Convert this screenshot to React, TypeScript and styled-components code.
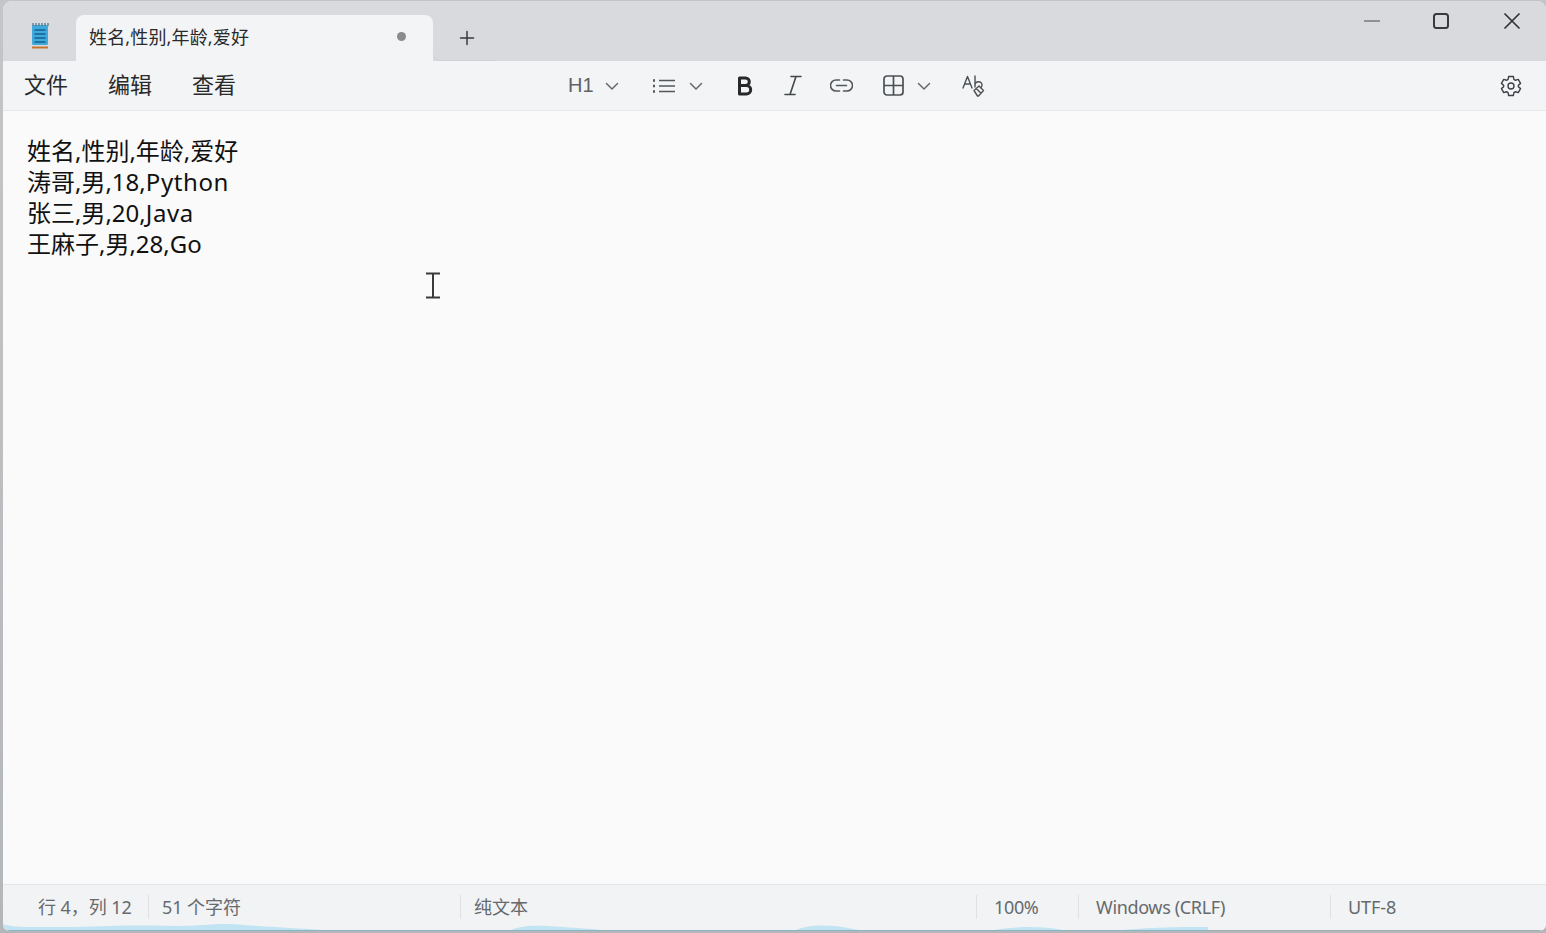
import React from "react";
import styled, { createGlobalStyle } from "styled-components";

const Global = createGlobalStyle`
  html, body { margin: 0; padding: 0; height: 100%; overflow: hidden; background: #b4b7ba; }
  * { box-sizing: border-box; }
`;
const LATIN = `"Noto Sans", "Noto Sans CJK SC", sans-serif`;

const Desktop = styled.div`
  width: 1546px;
  height: 933px;
  padding: 1px 0 2px 3px;
  background: linear-gradient(#c4c5c7, #b4b7ba);
  overflow: hidden;
`;
const Win = styled.main`
  position: relative;
  width: 1543px;
  height: 930px;
  display: flex;
  flex-direction: column;
  border-radius: 9px 9px 7px 7px;
  overflow: hidden;
  background: #fafafa;
  font-family: ${LATIN};
  color: #1b1b1b;
`;
const TitleBar = styled.header`
  height: 60px;
  flex: none;
  display: flex;
  align-items: flex-end;
  padding-left: 73px;
  background: #d8dadd;
`;
const AppIcon = styled.svg`
  width: 20px;
  height: 28px;
  margin: 0 26px 11px -46px;
  flex: none;
`;
const Tab = styled.div`
  position: relative;
  width: 357px;
  height: 46px;
  flex: none;
  display: flex;
  align-items: center;
  justify-content: space-between;
  padding: 0 27px 4px 13px;
  background: #f2f4f6;
  border-radius: 8px 8px 0 0;
  font-size: 18px;
  color: #2a2a2a;
`;
const TabName = styled.span`
  letter-spacing: 0.15px;
  white-space: nowrap;
`;
const Dot = styled.i`
  width: 9px;
  height: 9px;
  border-radius: 50%;
  background: #8a8b8d;
`;
const NewTab = styled.div`
  width: 64px;
  height: 46px;
  flex: none;
  display: flex;
  align-items: center;
  justify-content: center;
  padding-left: 4px;
  color: #3c3c3c;
  border-bottom: 1px solid #cfd1d4;
  border-bottom-left-radius: 8px;
`;
const WinControls = styled.div`
  margin-left: auto;
  align-self: flex-start;
  display: flex;
  align-items: center;
  gap: 53px;
  padding: 12px 26px 0 0;
  color: #333;
`;
const CloseGlyph = styled.svg`
  margin-left: 2px;
`;
const Toolbar = styled.nav`
  height: 50px;
  flex: none;
  display: flex;
  align-items: center;
  background: #f2f4f6;
  border-bottom: 1px solid #e6e7e9;
`;
const Menu = styled.div`
  width: 565px;
  flex: none;
  display: flex;
  gap: 40px;
  padding: 0 0 3px 21px;
`;
const MenuItem = styled.span`
  font-size: 22px;
  line-height: 30px;
  color: #2a2a2a;
  white-space: nowrap;
`;
const Tools = styled.div`
  display: flex;
  align-items: center;
  color: #3f4144;
`;
const H1 = styled.span`
  font-family: "Liberation Sans", sans-serif;
  font-size: 20px;
  color: #606265;
  width: 33px;
`;
const Tool = styled.span<{ $w: number; $gap?: number }>`
  width: ${(p) => p.$w}px;
  margin-left: ${(p) => p.$gap ?? 0}px;
  flex: none;
  display: flex;
  align-items: center;
  justify-content: center;
`;
const Gear = styled.span`
  margin-left: auto;
  display: flex;
  padding-right: 23px;
  color: #3f4144;
`;
const Editor = styled.pre`
  flex: 1;
  margin: 0;
  padding: 24px 24px;
  font-family: ${LATIN};
  font-size: 24px;
  line-height: 31px;
  color: #111;
  background: #fafafa;
`;
const Word = styled.span`
  letter-spacing: 0.6px;
`;
const CursorMark = styled.svg`
  position: absolute;
  left: 422px;
  top: 271px;
`;
const StatusBar = styled.footer`
  position: relative;
  height: 47px;
  flex: none;
  display: flex;
  align-items: center;
  padding-bottom: 3px;
  background: #f1f3f5;
  border-top: 1px solid #e4e5e7;
  font-size: 18px;
  color: #666a6d;
`;
const Cell = styled.div<{ $w: number; $pad?: number; $line?: boolean; $tight?: boolean }>`
  width: ${(p) => p.$w}px;
  flex: none;
  height: 24px;
  line-height: 24px;
  padding-left: ${(p) => p.$pad ?? 13}px;
  white-space: nowrap;
  letter-spacing: ${(p) => (p.$tight ? "-0.35px" : "-0.05px")};
  border-left: ${(p) => (p.$line ? "1px solid #dfe1e3" : "0")};
`;
const Wave = styled.svg`
  position: absolute;
  left: 0;
  bottom: 0;
`;

const Chevron = () => (
  <svg width="14" height="14" viewBox="0 0 14 14" fill="none" stroke="#66696c" strokeWidth="1.5" strokeLinecap="round" strokeLinejoin="round">
    <path d="M1.5 4.5 7 10l5.5-5.5" />
  </svg>
);

export default function App() {
  return (
    <Desktop>
      <Global />
      <Win>
        <TitleBar>
          <AppIcon viewBox="0 0 20 28">
            <rect x="2" y="3" width="16" height="20" rx="1.5" fill="#3fa9dc" />
            <rect x="2" y="24.5" width="16" height="2" fill="#c8732c" />
            <path d="M3 1v3M6 1v3M9 1v3M12 1v3M15 1v3M18 1v3" stroke="#4a6f86" strokeWidth="1.2" />
            <path d="M4.5 8h11M4.5 12h11M4.5 16h11M4.5 20h11" stroke="#12608f" strokeWidth="1.6" />
          </AppIcon>
          <Tab>
            <TabName>姓名,性别,年龄,爱好</TabName>
            <Dot />
          </Tab>
          <NewTab>
            <svg width="16" height="16" viewBox="0 0 16 16" stroke="#3a3a3a" strokeWidth="1.5" strokeLinecap="round">
              <path d="M8 1.5v13M1.5 8h13" />
            </svg>
          </NewTab>
          <WinControls>
            <svg width="16" height="16" viewBox="0 0 16 16" stroke="#777" strokeWidth="1.6"><path d="M0 8h16" /></svg>
            <svg width="16" height="16" viewBox="0 0 16 16" fill="none" stroke="#3a3a3a" strokeWidth="2"><rect x="1" y="1" width="14" height="14" rx="2.5" /></svg>
            <CloseGlyph width="16" height="16" viewBox="0 0 16 16" stroke="#333" strokeWidth="1.7" strokeLinecap="round"><path d="M1 1l14 14M15 1 1 15" /></CloseGlyph>
          </WinControls>
        </TitleBar>
        <Toolbar>
          <Menu>
            <MenuItem>文件</MenuItem>
            <MenuItem>编辑</MenuItem>
            <MenuItem>查看</MenuItem>
          </Menu>
          <Tools>
            <H1>H1</H1>
            <Tool $w={22}><Chevron /></Tool>
            <Tool $w={46} $gap={18}>
              <svg width="24" height="16" viewBox="0 0 24 16" stroke="#55585b" strokeWidth="1.5" fill="none">
                <path d="M7 2.5h16M7 8h16M7 13.5h16" />
                <path d="M1 2.5h2M1 8h2M1 13.5h2" strokeWidth="2.4" />
              </svg>
            </Tool>
            <Tool $w={18}><Chevron /></Tool>
            <Tool $w={48} $gap={16}>
              <svg width="16" height="20" viewBox="0 0 16 20" fill="none" stroke="#26282a" strokeWidth="3" strokeLinejoin="round">
                <path d="M2.5 2h6a3.8 3.8 0 0 1 0 7.6h-6zM2.5 9.6h7a4 4 0 0 1 0 8.4h-7z" />
              </svg>
            </Tool>
            <Tool $w={48}>
              <svg width="18" height="21" viewBox="0 0 18 21" fill="none" stroke="#44474a" strokeWidth="1.6" strokeLinecap="round">
                <path d="M7 1.5h10M1 19.5h10M12 1.5 6 19.5" />
              </svg>
            </Tool>
            <Tool $w={48}>
              <svg width="23" height="13" viewBox="0 0 23 13" fill="none" stroke="#55585b" strokeWidth="1.6" strokeLinecap="round">
                <path d="M9.5 1H6a5.5 5.5 0 0 0 0 11h3.5M13.5 1H17a5.5 5.5 0 0 1 0 11h-3.5M6.5 6.5h10" />
              </svg>
            </Tool>
            <Tool $w={48} $gap={4}>
              <svg width="21" height="21" viewBox="0 0 21 21" fill="none" stroke="#4d5053" strokeWidth="1.7">
                <rect x="1" y="1" width="19" height="19" rx="3" />
                <path d="M10.5 1v19M1 10.5h19" />
              </svg>
            </Tool>
            <Tool $w={14}><Chevron /></Tool>
            <Tool $w={56} $gap={14}>
              <svg width="25" height="24" viewBox="0 0 25 24" fill="none" stroke="#4d5053" strokeWidth="1.4" strokeLinejoin="round" strokeLinecap="round">
                <path d="M2 14 6.5 2.5 11 14M3.7 10h5.6" />
                <path d="M14 2v11M14 11.5c0-5 7-5 7-.5 0 1-.3 1.7-1 2.5" />
                <path d="m13 16.5 5-4.500 4.500 4.500-5 5.500h-1zM15.200 14.500l4.800 4.800" />
              </svg>
            </Tool>
          </Tools>
          <Gear>
            <svg width="24" height="24" viewBox="0 0 24 24" fill="none" stroke="currentColor" strokeWidth="1.4" strokeLinejoin="round">
              <path d="M9.67 2.5h4.66l.6 2.9 1.5.87 2.8-.93 2.33 4.03-2.2 1.97v1.32l2.2 1.97-2.33 4.03-2.8-.93-1.5.87-.6 2.9H9.67l-.6-2.9-1.5-.87-2.8.93-2.33-4.03 2.2-1.97v-1.32l-2.2-1.97 2.33-4.03 2.8.93 1.5-.87z" />
              <circle cx="12" cy="12" r="3" />
            </svg>
          </Gear>
        </Toolbar>
        <Editor>
          {"姓名,性别,年龄,爱好\n涛哥,男,18,"}
          <Word>Python</Word>
          {"\n张三,男,20,"}
          <Word>Java</Word>
          {"\n王麻子,男,28,Go"}
        </Editor>
        <CursorMark width="16" height="27" viewBox="0 0 16 27" fill="none" stroke="#3a3a3a" strokeWidth="2">
          <path d="M1 1.5h14M1 25.5h14M8 1.5v24" />
        </CursorMark>
        <StatusBar>
          <Cell $w={145} $pad={35}>行 4，列 12</Cell>
          <Cell $w={312} $line>51 个字符</Cell>
          <Cell $w={516} $line>纯文本</Cell>
          <Cell $w={102} $pad={17} $line $tight>100%</Cell>
          <Cell $w={252} $pad={17} $line $tight>Windows (CRLF)</Cell>
          <Cell $w={200} $pad={17} $line>UTF-8</Cell>
          <Wave width="1543" height="9" viewBox="0 0 1543 9" preserveAspectRatio="none">
            <path
              d="M0 2C10 6 30 5 70 5C110 4 130 3 170 4C200 4 220 0 240 3C270 5 310 7 335 9H505C520 3 530 3 560 5C575 6 590 7 610 9H790C805 3 820 2 845 6C855 8 860 9 870 9H985C1010 4 1040 4 1060 8L1070 9H1105C1150 5 1180 5 1205 5V9H0Z"
              fill="#c2e4f2"
            />
            <rect x="0" y="8" width="1205" height="1" fill="#8fb4c2" />
            <rect x="1205" y="8" width="338" height="1" fill="#a9acae" />
          </Wave>
        </StatusBar>
      </Win>
    </Desktop>
  );
}
